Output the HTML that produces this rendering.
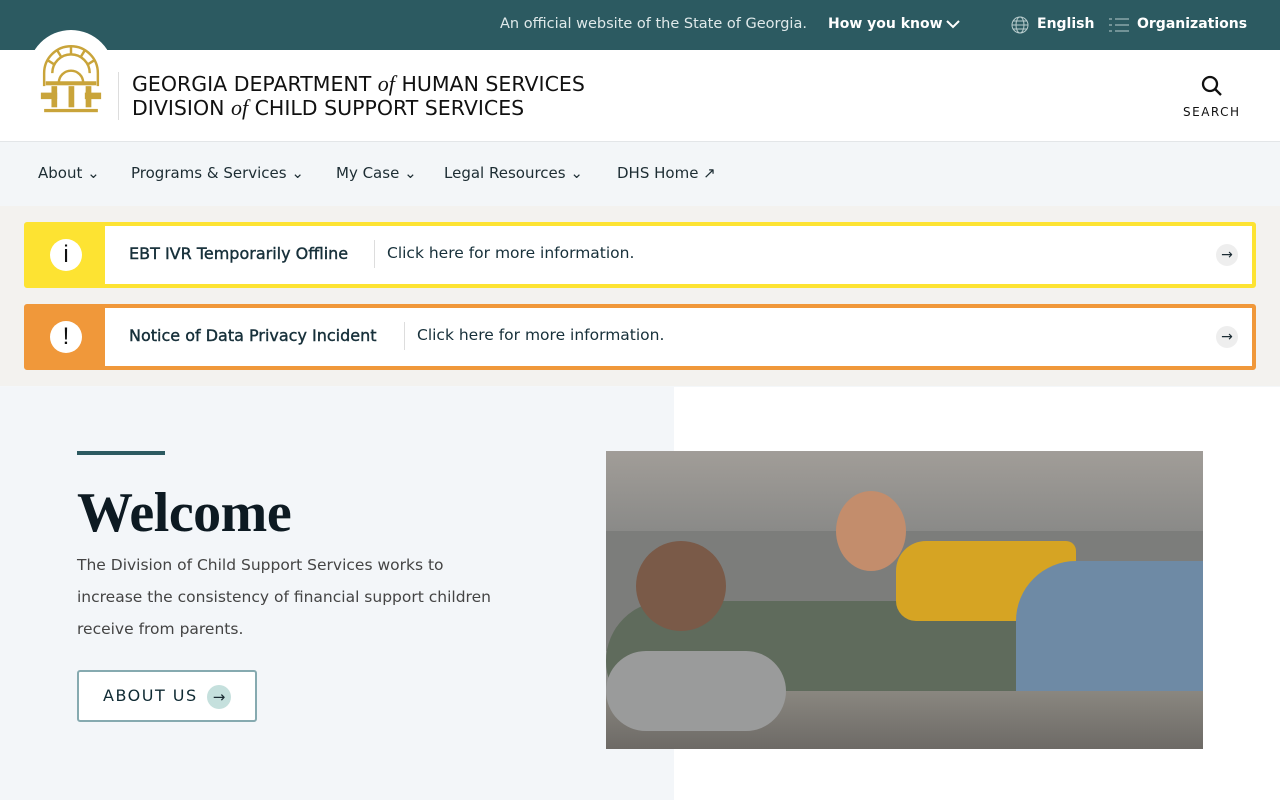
<!DOCTYPE html>
<html><head><meta charset="utf-8"><style>
*{margin:0;padding:0;box-sizing:border-box}
body{width:1280px;height:800px;overflow:hidden;font-family:"DejaVu Sans","Liberation Sans",sans-serif;background:#f4f7f9;color:#1b2b33;position:relative}
.top{height:50px;background:#2c5a61;color:#fff;position:relative;font-size:14.5px}
.top span{position:absolute;top:16px}
.hdr{height:92px;background:#fff;position:relative;border-bottom:1px solid #e3e6e8}
.seal{position:absolute;left:28px;top:30px;width:86px;height:86px;border-radius:50%;background:#fff;z-index:5}
.title{position:absolute;left:118px;top:22px;border-left:1px solid #ddd;padding-left:13px;font-size:20.5px;line-height:24px;color:#111}
.title i{font-family:"Liberation Serif",serif;font-size:22px}
.nav{height:64px;background:#f3f6f8;position:relative;font-size:15px;color:#1d2d33}
.nav span{position:absolute;top:22px}
.alerts{background:#f3f2ef;height:180px;position:relative}
.al{position:absolute;left:24px;width:1232px;height:66px;border:4px solid;border-radius:3px;background:#fff}
.al .ic{position:absolute;left:0;top:0;width:77px;height:58px}
.al .ic b{position:absolute;left:22px;top:13px;width:32px;height:32px;border-radius:50%;background:#fff;color:#111;font:400 24px "Liberation Sans",sans-serif;text-align:center;line-height:32px}
.al .t{position:absolute;left:101px;top:18px;font-size:16px;color:#17303a;-webkit-text-stroke:0.4px #17303a}
.al .sep{position:absolute;top:14px;width:1px;height:28px;background:#ddd}
.al .m{position:absolute;top:18px;font-size:15.5px;color:#17303a}
.al .ar{position:absolute;right:14px;top:18px;width:22px;height:22px;border-radius:50%;background:#eee;font-size:14px;text-align:center;line-height:22px}
.hero{position:absolute;top:387px;left:0;width:1280px;height:413px;background:#fff}
.hl{position:absolute;left:0;top:0;width:674px;height:413px;background:#f3f6f9}
</style></head><body>
<div class="top">
<span style="left:500px;color:#dfe9ea">An official website of the State of Georgia.</span>
<span style="left:828px;font-weight:bold;font-size:14px">How you know</span>
<svg style="position:absolute;left:946px;top:19px" width="14" height="10"><path d="M1 2l6 6 6-6" stroke="#fff" stroke-width="2" fill="none"/></svg>
<svg style="position:absolute;left:1011px;top:16px" width="18" height="18" stroke="#b8cccd" fill="none"><circle cx="9" cy="9" r="8"/><ellipse cx="9" cy="9" rx="4" ry="8"/><path d="M1 9h16M2 5h14M2 13h14"/></svg>
<span style="left:1037px;font-weight:bold;font-size:14px">English</span>
<svg style="position:absolute;left:1109px;top:17px" width="20" height="16" stroke="#b8cccd"><path d="M0 2h3M6 2h14M0 8h3M6 8h14M0 14h3M6 14h14"/></svg>
<span style="left:1137px;font-weight:bold;font-size:14px">Organizations</span>
</div>
<div class="seal"><svg style="position:absolute;left:8px;top:10px" width="70" height="76" viewBox="0 0 86 92"><g fill="none" stroke="#c9a43a" stroke-width="3"><path d="M10 56V40a33 33 0 0 1 66 0v16"/><path d="M20 40a23 23 0 0 1 46 0"/><path d="M43 7v10M26 12l5 8M60 12l-5 8M14 24l8 5M72 24l-8 5"/><path d="M28 52a15 15 0 0 1 30 0"/></g><g fill="#c9a43a"><rect x="12" y="50" width="62" height="5"/><rect x="19" y="56" width="7" height="26"/><rect x="40" y="56" width="7" height="26"/><rect x="61" y="56" width="7" height="26"/><rect x="10" y="84" width="66" height="4"/><path d="M6 64h20v8H6zM60 64h20v8H60z"/></g></svg></div>
<div class="hdr">
<div class="title">GEORGIA DEPARTMENT <i>of</i> HUMAN SERVICES<br>DIVISION <i>of</i> CHILD SUPPORT SERVICES</div>
<svg style="position:absolute;left:1201px;top:25px" width="22" height="22" stroke="#111" stroke-width="2.3" fill="none"><circle cx="9" cy="9" r="7"/><path d="M14 14l6 6"/></svg>
<span style="position:absolute;left:1183px;top:55px;font-size:12px;letter-spacing:1.5px;color:#111">SEARCH</span>
</div>
<div class="nav">
<span style="left:38px">About ⌄</span>
<span style="left:131px">Programs &amp; Services ⌄</span>
<span style="left:336px">My Case ⌄</span>
<span style="left:444px">Legal Resources ⌄</span>
<span style="left:617px">DHS Home ↗</span>
</div>
<div class="alerts">
<div class="al" style="top:16px;border-color:#fde332"><div class="ic" style="background:#fde332"><b>i</b></div><div class="t">EBT IVR Temporarily Offline</div><div class="sep" style="left:346px"></div><div class="m" style="left:359px">Click here for more information.</div><div class="ar">→</div></div>
<div class="al" style="top:98px;border-color:#f0983a"><div class="ic" style="background:#f0983a"><b>!</b></div><div class="t">Notice of Data Privacy Incident</div><div class="sep" style="left:376px"></div><div class="m" style="left:389px">Click here for more information.</div><div class="ar">→</div></div>
</div>
<div class="hero">
<div class="hl"></div>
<div style="position:absolute;left:77px;top:64px;width:88px;height:4px;background:#2c5a61"></div>
<div style="position:absolute;left:77px;top:94px;font:bold 56px 'Liberation Serif',serif;color:#0d1a22;letter-spacing:-0.5px">Welcome</div>
<div style="position:absolute;left:77px;top:162px;width:415px;font-size:15.5px;line-height:32px;color:#444">The Division of Child Support Services works to increase the consistency of financial support children receive from parents.</div>
<div style="position:absolute;left:77px;top:283px;width:180px;height:52px;border:2px solid #86aab0;border-radius:3px;background:#fff"><span style="position:absolute;left:24px;top:14px;font-size:16px;letter-spacing:1.5px;color:#0f2a33">ABOUT US</span><span style="position:absolute;left:128px;top:13px;width:24px;height:24px;border-radius:50%;background:#c5e0dd;text-align:center;line-height:24px;font-size:15px">→</span></div>
<div style="position:absolute;left:606px;top:64px;width:597px;height:298px;overflow:hidden;background:#8d8e8c">
<div style="position:absolute;left:0;top:0;width:597px;height:80px;background:linear-gradient(#a19d98,#8a8a88)"></div>
<div style="position:absolute;left:0;top:80px;width:597px;height:120px;background:#7c7d7b"></div>
<div style="position:absolute;left:0;top:150px;width:440px;height:120px;background:#5f6b5c;border-radius:60px 20px 10px 60px"></div>
<div style="position:absolute;left:30px;top:90px;width:90px;height:90px;border-radius:50%;background:#7a5a48"></div>
<div style="position:absolute;left:290px;top:90px;width:180px;height:80px;background:#d6a423;border-radius:30px 10px 10px 20px"></div>
<div style="position:absolute;left:230px;top:40px;width:70px;height:80px;border-radius:50%;background:#c38d6c"></div>
<div style="position:absolute;left:410px;top:110px;width:187px;height:170px;background:#6e8aa5;border-radius:60px 0 0 20px"></div>
<div style="position:absolute;left:0;top:240px;width:597px;height:58px;background:linear-gradient(#8a8780,#6d6a66)"></div>
<div style="position:absolute;left:0;top:200px;width:180px;height:80px;background:#9a9b9b;border-radius:40px"></div>
</div>
</div>
</body></html>
